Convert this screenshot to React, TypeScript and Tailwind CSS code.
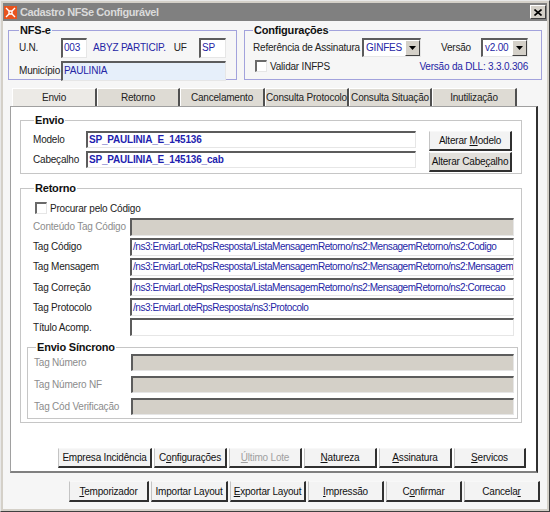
const ff = "font-['Liberation_Sans',Arial,sans-serif]";

function Sunken({
  className = '',
  text,
  textClass = 'text-[#2525a5]',
  disabled = false,
}: {
  className?: string;
  text?: string;
  textClass?: string;
  disabled?: boolean;
}) {
  return (
    <div
      className={`flex min-w-0 items-center overflow-hidden whitespace-nowrap border-t-2 border-l-2 border-b border-r border-t-[#5c5c5c] border-l-[#5c5c5c] border-b-[#e6e6e6] border-r-[#e6e6e6] pl-[1px] ${
        disabled ? 'bg-[#d4d0c8]' : 'bg-white'
      } ${className}`}
    >
      <span className={`leading-none ${textClass}`}>{text}</span>
    </div>
  );
}

function Select({ value, className = '' }: { value: string; className?: string }) {
  return (
    <div
      className={`flex h-[19px] items-stretch border-t-2 border-l-2 border-b border-r border-t-[#5c5c5c] border-l-[#5c5c5c] border-b-[#e6e6e6] border-r-[#e6e6e6] bg-white ${className}`}
    >
      <span className="flex-1 pl-[2px] leading-[16px] text-[#2525a5]">{value}</span>
      <span className="flex w-[15px] items-center justify-center border border-t-white border-l-white border-r-[#404040] border-b-[#404040] bg-[#d4d0c8]">
        <svg width="7" height="4" viewBox="0 0 7 4">
          <path d="M0 0h7L3.5 4z" fill="#000" />
        </svg>
      </span>
    </div>
  );
}

function Check({ label }: { label: string }) {
  return (
    <div className="flex items-center gap-[3px]">
      <span className="h-[12px] w-[12px] border-t-2 border-l-2 border-b border-r border-t-[#6a6a6a] border-l-[#6a6a6a] border-b-[#e6e6e6] border-r-[#e6e6e6] bg-white" />
      <span className="text-[#222]">{label}</span>
    </div>
  );
}

function Btn({
  children,
  className = '',
  disabled = false,
}: {
  children: React.ReactNode;
  className?: string;
  disabled?: boolean;
}) {
  return (
    <div
      className={`flex items-center justify-center border-t border-l border-r-2 border-b-2 border-t-[#f8f8f8] border-l-[#c4c4c4] border-r-[#303030] border-b-[#303030] bg-[#f3f3f3] ${
        disabled ? 'text-[#a0a0a0]' : 'text-[#111]'
      } ${className}`}
    >
      {children}
    </div>
  );
}

const tabs: [string, number][] = [
  ['Envio', 85],
  ['Retorno', 83],
  ['Cancelamento', 85],
  ['Consulta Protocolo', 84],
  ['Consulta Situação', 83],
  ['Inutilização', 85],
];

const tagRows: { label: string; value: string; disabled?: boolean }[] = [
  { label: 'Conteúdo Tag Código', value: '', disabled: true },
  { label: 'Tag Código', value: '/ns3:EnviarLoteRpsResposta/ListaMensagemRetorno/ns2:MensagemRetorno/ns2:Codigo' },
  { label: 'Tag Mensagem', value: '/ns3:EnviarLoteRpsResposta/ListaMensagemRetorno/ns2:MensagemRetorno/ns2:Mensagem' },
  { label: 'Tag Correção', value: '/ns3:EnviarLoteRpsResposta/ListaMensagemRetorno/ns2:MensagemRetorno/ns2:Correcao' },
  { label: 'Tag Protocolo', value: '/ns3:EnviarLoteRpsResposta/ns3:Protocolo' },
  { label: 'Título Acomp.', value: '' },
];

export default function App() {
  return (
    <div
      className={`${ff} flex h-[512px] w-[550px] flex-col whitespace-nowrap border border-t-[#e8e8e8] border-l-[#e8e8e8] border-r-[#404040] border-b-[#404040] bg-[#d4d0c8] p-[2px] text-[10px] tracking-[-0.2px] text-[#222]`}
    >
      {/* Title bar */}
      <div className="flex h-[18px] items-center bg-[#808080] pl-[1px] pr-[1px]">
        <div className="flex h-[13px] w-[13px] items-center justify-center bg-[#e8541e]">
          <svg width="11" height="11" viewBox="0 0 11 11">
            <path d="M1 1l3 3M10 1L7 4M1 10l3-3M10 10L7 7M4 4h3v3H4z" stroke="#fff" strokeWidth="1.4" fill="none" />
          </svg>
        </div>
        <span className="ml-[3px] text-[11px] font-bold tracking-[-0.4px] text-[#dadada]">Cadastro NFSe Configurável</span>
        <div className="ml-auto flex h-[14px] w-[16px] items-center justify-center border border-t-white border-l-white border-r-[#404040] border-b-[#404040] bg-[#d4d0c8]">
          <svg width="8" height="7" viewBox="0 0 8 7">
            <path d="M0.5 0.5l7 6M7.5 0.5l-7 6" stroke="#000" strokeWidth="1.6" />
          </svg>
        </div>
      </div>

      {/* Body */}
      <div className="flex flex-1 flex-col bg-[#f6f6f6] px-[5px]">
        {/* Top group boxes */}
        <div className="mt-[1px] flex gap-[7px]">
          <fieldset className="h-[58px] w-[229px] border border-[#a2a2dc] px-[10px]">
            <legend className="px-[1px] text-[11px] font-bold text-[#111]">NFS-e</legend>
            <div className="-mt-[1px] flex items-center">
              <span className="w-[42px]">U.N.</span>
              <Sunken className="h-[20px] w-[26px]" text="003" />
              <span className="ml-[6px] text-[#2525a5]">ABYZ PARTICIP.</span>
              <span className="ml-[8px]">UF</span>
              <Sunken className="ml-auto h-[20px] w-[27px]" text="SP" />
            </div>
            <div className="mt-[3px] flex items-center">
              <span className="w-[42px]">Município</span>
              <Sunken className="h-[20px] flex-1 !bg-[#e6effa]" text="PAULINIA" />
            </div>
          </fieldset>

          <fieldset className="h-[58px] w-[298px] border border-[#a2a2dc] pl-[8px] pr-[13px]">
            <legend className="px-[1px] text-[11px] font-bold text-[#111]">Configurações</legend>
            <div className="-mt-[1px] flex items-center">
              <span className="w-[109px]">Referência de Assinatura</span>
              <Select value="GINFES" className="w-[59px]" />
              <span className="ml-[20px]">Versão</span>
              <Select value="v2.00" className="ml-auto w-[47px]" />
            </div>
            <div className="mt-[2px] flex items-center pl-[2px]">
              <Check label="Validar INFPS" />
              <span className="ml-auto text-[#2525a5]">Versão da DLL: 3.3.0.306</span>
            </div>
          </fieldset>
        </div>

        {/* Tabs */}
        <div className="mt-[8px] flex pl-[4px]">
          {tabs.map(([t, w], i) => (
            <div
              key={t}
              style={{ width: w }}
              className={`flex h-[18px] items-center justify-center border-t border-l border-r-2 border-t-white border-l-white border-r-[#505050] ${
                i === 0 ? 'bg-[#eceae6]' : 'bg-[#dedbd4]'
              }`}
            >
              {t}
            </div>
          ))}
        </div>

        {/* Tab panel */}
        <div className="ml-[2px] mr-[4px] flex h-[367px] flex-col border border-r-2 border-b-2 border-t-[#a0a0a0] border-l-[#a0a0a0] border-r-[#303030] border-b-[#808080] bg-white pl-[9px] pr-[14px]">
          <fieldset className="mt-[5px] h-[62px] border border-[#c6c6c6] pl-[12px] pr-[9px]">
            <legend className="ml-[1px] px-[1px] text-[11px] font-bold text-[#111]">Envio</legend>
            <div className="flex">
              <div className="flex flex-col gap-[3px] pt-[2px]">
                <div className="flex items-center">
                  <span className="w-[53px]">Modelo</span>
                  <Sunken className="h-[17px] w-[330px]" text="SP_PAULINIA_E_145136" textClass="font-bold text-[#1f1fb0]" />
                </div>
                <div className="flex items-center">
                  <span className="w-[53px]">Cabeçalho</span>
                  <Sunken className="h-[17px] w-[330px]" text="SP_PAULINIA_E_145136_cab" textClass="font-bold text-[#1f1fb0]" />
                </div>
              </div>
              <div className="ml-auto flex flex-col gap-[1px] pt-[2px]">
                <Btn className="h-[20px] w-[83px]">
                  <span>
                    Alterar <u>M</u>odelo
                  </span>
                </Btn>
                <Btn className="h-[20px] w-[83px] !bg-[#e2e0db]">
                  <span>
                    Alterar Cabe<u>ç</u>alho
                  </span>
                </Btn>
              </div>
            </div>
          </fieldset>

          <fieldset className="mt-[6px] h-[243px] border border-[#c6c6c6] pl-[12px] pr-[7px]">
            <legend className="ml-[1px] px-[1px] text-[11px] font-bold text-[#111]">Retorno</legend>
            <div className="mt-[4px] pl-[2px]">
              <Check label="Procurar pelo Código" />
            </div>
            <div className="mt-[2px] flex flex-col gap-[2.2px]">
              {tagRows.map((r) => (
                <div key={r.label} className="flex items-center">
                  <span className={`w-[97px] ${r.disabled ? 'text-[#8c8c8c]' : ''}`}>{r.label}</span>
                  <Sunken
                    className="h-[18px] flex-1"
                    text={r.value}
                    disabled={r.disabled}
                    textClass="text-[#2525a5] tracking-[-0.45px]"
                  />
                </div>
              ))}
            </div>
            <fieldset className="-mr-[4px] -ml-[6px] mt-[3px] h-[80px] border border-[#c6c6c6] pl-[6px] pr-[3px]">
              <legend className="ml-[2px] px-[1px] text-[11px] font-bold text-[#111]">Envio Síncrono</legend>
              <div className="-mt-[2px] flex flex-col gap-[5px]">
                {['Tag Número', 'Tag Número NF', 'Tag Cód Verificação'].map((l) => (
                  <div key={l} className="flex items-center">
                    <span className="w-[97px] text-[#8c8c8c]">{l}</span>
                    <Sunken className="h-[17px] flex-1" disabled />
                  </div>
                ))}
              </div>
            </fieldset>
          </fieldset>

          <div className="mt-auto mb-[3px] -mr-[4px] flex justify-end gap-[2px]">
            <Btn className="h-[20px] w-[94px]">Empresa Incidência</Btn>
            <Btn className="h-[20px] w-[73px]">
              <span>
                C<u>o</u>nfigurações
              </span>
            </Btn>
            <Btn className="h-[20px] w-[73px]" disabled>
              <span>
                <u>Ú</u>ltimo Lote
              </span>
            </Btn>
            <Btn className="h-[20px] w-[73px]">
              <span>
                <u>N</u>atureza
              </span>
            </Btn>
            <Btn className="h-[20px] w-[73px]">
              <span>
                <u>A</u>ssinatura
              </span>
            </Btn>
            <Btn className="h-[20px] w-[72px]">
              <span>
                <u>S</u>ervicos
              </span>
            </Btn>
          </div>
        </div>

        {/* Bottom buttons */}
        <div className="mt-[8px] flex justify-end gap-[2px] pr-[2px]">
          <Btn className="h-[21px] w-[80px]">
            <span>
              <u>T</u>emporizador
            </span>
          </Btn>
          <Btn className="h-[21px] w-[77px]">Importar Layout</Btn>
          <Btn className="h-[21px] w-[76px]">
            <span>
              <u>E</u>xportar Layout
            </span>
          </Btn>
          <Btn className="h-[21px] w-[76px]">
            <span>
              <u>I</u>mpressão
            </span>
          </Btn>
          <Btn className="h-[21px] w-[76px]">
            <span>
              C<u>o</u>nfirmar
            </span>
          </Btn>
          <Btn className="h-[21px] w-[76px]">
            <span>
              Cancela<u>r</u>
            </span>
          </Btn>
        </div>
      </div>
    </div>
  );
}
